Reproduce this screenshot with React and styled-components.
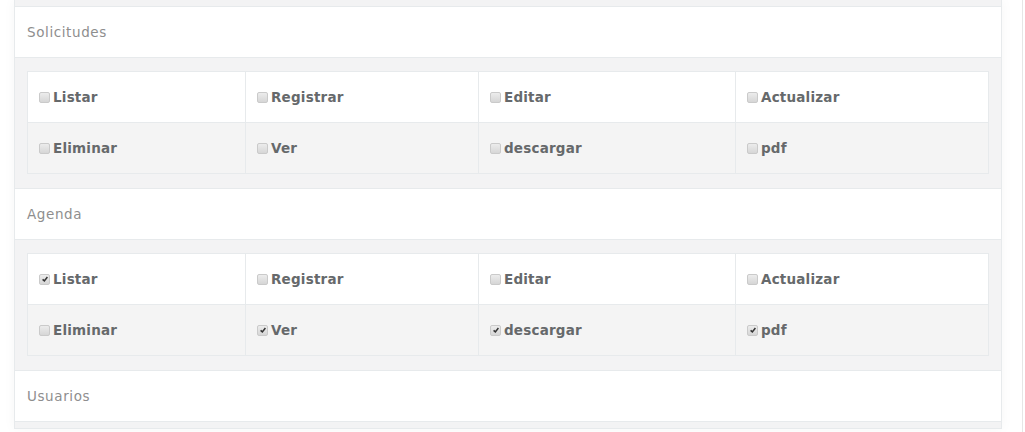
import React from "react";
import styled, { createGlobalStyle } from "styled-components";

const GlobalStyle = createGlobalStyle`
  html, body {
    margin: 0;
    padding: 0;
    background: #ffffff;
  }
  body {
    font-family: "DejaVu Sans", "Liberation Sans", sans-serif;
    overflow: hidden;
  }
`;

const groups = [
  {
    name: "Solicitudes",
    perms: {
      Listar: false,
      Registrar: false,
      Editar: false,
      Actualizar: false,
      Eliminar: false,
      Ver: false,
      descargar: false,
      pdf: false,
    },
  },
  {
    name: "Agenda",
    perms: {
      Listar: true,
      Registrar: false,
      Editar: false,
      Actualizar: false,
      Eliminar: false,
      Ver: true,
      descargar: true,
      pdf: true,
    },
  },
];

export default function App() {
  return (
    <>
      <GlobalStyle />
      <Page>
        <Stack>
          <PanelBody $stub />
          {groups.map((g) => (
            <React.Fragment key={g.name}>
              <PanelHeading>{g.name}</PanelHeading>
              <PanelBody>
                <PermGrid>
                  {Object.entries(g.perms).map(([label, checked], i) => (
                    <Cell key={label} $odd={i >= 4}>
                      <Check $checked={checked}>
                        {checked && (
                          <svg viewBox="0 0 10 10" width="8" height="8">
                            <path
                              d="M2 5.4 L4.2 7.4 L8 2.6"
                              fill="none"
                              stroke="#333"
                              strokeWidth="1.9"
                            />
                          </svg>
                        )}
                      </Check>
                      <Label>{label}</Label>
                    </Cell>
                  ))}
                </PermGrid>
              </PanelBody>
            </React.Fragment>
          ))}
          <PanelHeading>Usuarios</PanelHeading>
          <PanelBody $stub />
        </Stack>
      </Page>
    </>
  );
}

const Page = styled.div`
  height: 432px;
  width: 1023px;
  padding-left: 14px;
  box-sizing: border-box;
  border-right: 1px solid #e6e6e6;
  display: flex;
  flex-direction: column;
`;

const Stack = styled.div`
  width: 988px;
  box-sizing: border-box;
  border-left: 1px solid #e7eaec;
  border-right: 1px solid #e7eaec;
  box-shadow: 0 0 12px rgba(0, 0, 0, 0.04);
  display: flex;
  flex-direction: column;
`;

const PanelHeading = styled.div`
  height: 50px;
  display: flex;
  align-items: center;
  padding: 0 12px;
  background: #ffffff;
  border-bottom: 1px solid #e7eaec;
  color: #8e8e8e;
  font-size: 13.5px;
  letter-spacing: 0.6px;
  font-weight: 400;
`;

const PanelBody = styled.div`
  background: #f3f3f4;
  border-bottom: 1px solid #e7eaec;
  padding: ${(p) => (p.$stub ? "0" : "13px 12px 14px")};
  height: ${(p) => (p.$stub ? "6px" : "auto")};
`;

const PermGrid = styled.div`
  display: grid;
  grid-template-columns: 218px 233px 257px 1fr;
  border-top: 1px solid #e7eaec;
  border-left: 1px solid #e7eaec;
`;

const Cell = styled.div`
  box-sizing: border-box;
  height: 51px;
  display: flex;
  align-items: center;
  padding-left: 11px;
  background: ${(p) => (p.$odd ? "#f4f4f4" : "#ffffff")};
  border-right: 1px solid #e7eaec;
  border-bottom: 1px solid #e7eaec;
`;

const Check = styled.span`
  width: 11px;
  height: 11px;
  box-sizing: border-box;
  border-radius: 2px;
  border: 1px solid #cacaca;
  background: linear-gradient(#ececec, #d6d6d6);
  display: flex;
  align-items: center;
  justify-content: center;
  margin-right: 3px;
`;

const Label = styled.span`
  font-size: 13.5px;
  font-weight: 700;
  letter-spacing: 0.2px;
  color: #66696b;
`;
